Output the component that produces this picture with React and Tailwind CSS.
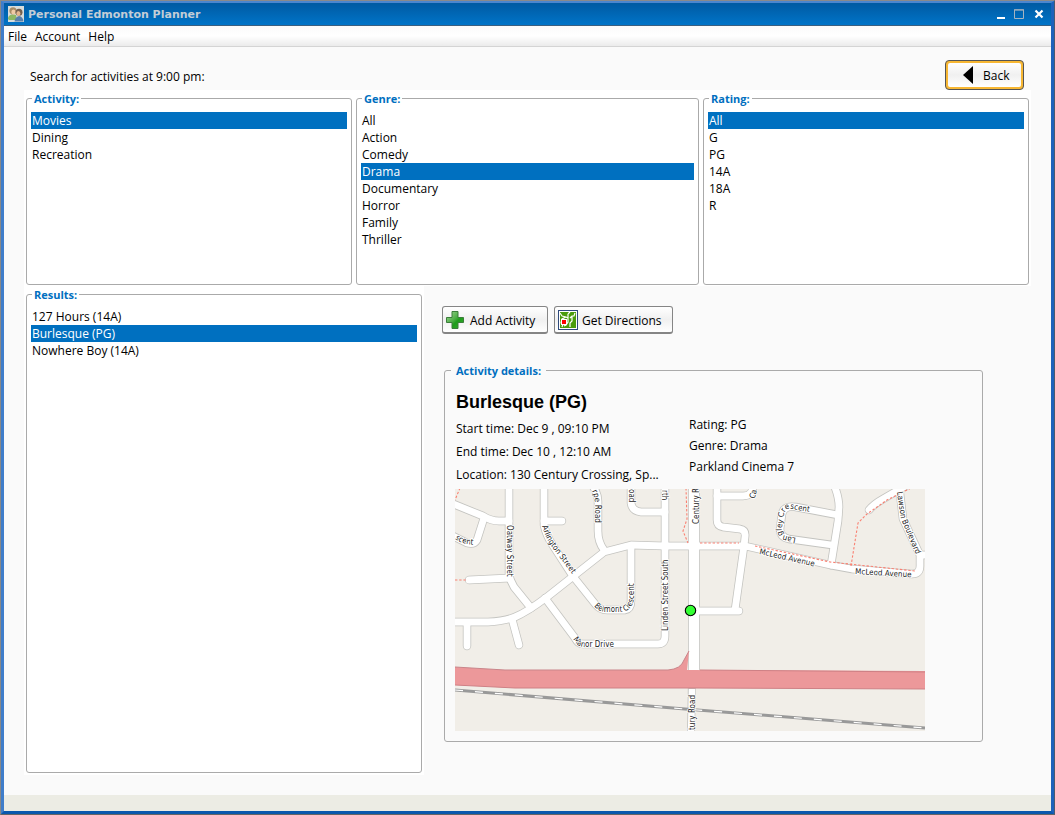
import { useState } from "react";

const roads = [
  "M-4 14 L28 27 Q36 32 44 32 L54 32",
  "M29 29 L22 51 Q19 56 12 54 L-4 46",
  "M54 -4 L54 88 L59 98 L76 119",
  "M14 91 L55 89",
  "M89 -4 L89 36 Q91 46 97 55 L117 86 L141 116 Q145 121 152 121 L170 121 Q176 120 176 112 L176 57",
  "M89 32 L107 32",
  "M137 -4 Q143 4 143 12 L143 42 Q143 53 149 61",
  "M-4 133 L33 133 Q50 132 60 128 Q72 123 92 108 L149 63 L176 56 L210 57 L290 57 L375 76 L397 80 L443 84 L457 85 Q465 85 465 77 L465 66 L474 66",
  "M176 -4 L176 14 Q177 22 186 23 L210 23",
  "M210 -4 L210 147 Q210 155 203 155 L128 155 Q123 155 120 149 L90 109",
  "M262 -4 L262 31 Q262 37 268 38 L285 40 Q291 41 290 48 L289 57 L280 121",
  "M262 7 L288 7 Q298 7 298 -4",
  "M240 122 L284 122",
  "M379 -4 Q384 8 384 18 L383 32 L376 76",
  "M383 26 L341 18 Q329 16 327 25 L325 40 Q325 48 334 50 L377 56",
  "M414 21 Q419 15 428 10 L452 -4",
  "M444 -4 L448 30 L464 64",
  "M12 134 L12 157",
  "M57 130 L64 156",
];

const paths = [
  "M5 -1 L0 11",
  "M231 -1 L232 30 L228 42 L233 54",
  "M0 91 L12 91",
  "M245 54 L284 54",
  "M300 57 L375 73 L460 82",
  "M396 77 L403 34 L412 25 L432 11 L456 -1",
];

const labels = [
  { id: "oatway", d: "M52 36 L52 100", text: "Oatway Street" },
  { id: "arlington", d: "M87 37 Q91 50 97 58 L126 97", text: "Arlington Street" },
  { id: "thorpe", d: "M137 2 Q140 8 140 16 L140 60", text: "rpe Road" },
  { id: "road", d: "M174 0 L174 30", text: "oad" },
  { id: "north", d: "M207 1 L207 30", text: "rth" },
  { id: "linden", d: "M213 142 L213 50", text: "Linden Street South" },
  { id: "belmont", d: "M139 117 Q144 123 152 123 L166 123 Q178 122 179 108 L179 60", text: "Belmont Crescent" },
  { id: "manor", d: "M118 150 Q122 158 130 158 L190 158", text: "Manor Drive" },
  { id: "scent", d: "M0 50 Q10 57 28 56", text: "scent" },
  { id: "century", d: "M244 35 L244 -10", text: "Century R" },
  { id: "tury", d: "M240 241 L240 190", text: "tury Road" },
  { id: "mcleod1", d: "M304 65 L375 81", text: "McLeod Avenue" },
  { id: "mcleod2", d: "M400 85 L470 89", text: "McLeod Avenue" },
  { id: "lawson", d: "M442 3 L446 30 L467 80", text: "Lawson Boulevard" },
  { id: "langley", d: "M341 49 L331 47 Q326 46 327 38 L329 25 Q331 18 338 20 L364 25", text: "Langley Crescent" },
  { id: "ca", d: "M299 10 Q302 6 302 -4", text: "Ca" },
];

function StreetMap() {
  return (
    <svg
      viewBox="0 0 470 242"
      className="block h-[242px] w-[470px]"
      role="img"
      aria-label="Map of the activity location"
      fontFamily="'DejaVu Sans Condensed', 'Open Sans', sans-serif"
      fontSize="8"
    >
      <rect width="470" height="242" fill="#f1eee8" />
      <g fill="none" strokeLinecap="round" strokeLinejoin="round">
        {roads.map((d) => (
          <path key={d} d={d} stroke="#c4c4c0" strokeWidth="8.4" />
        ))}
        <path d="M239 -4 L239 188" stroke="#c4c4c0" strokeWidth="12" strokeLinecap="butt" />
        <path d="M237 190 L236 246" stroke="#c4c4c0" strokeWidth="8" />
        {roads.map((d) => (
          <path key={d} d={d} stroke="#fff" strokeWidth="6.8" />
        ))}
        <path d="M239 -4 L239 190" stroke="#fff" strokeWidth="10.4" strokeLinecap="butt" />
      </g>
      <path
        d="M0 178 L50 181 L213 181 Q226 180 229 171 L234 162 L232 181 L470 182 L470 200 L240 199 L60 199 L0 196 Z"
        fill="#ec989a"
      />
      <path d="M0 178 L50 181 L213 181 Q226 180 229 171 L234 162" fill="none" stroke="#c9858a" />
      <path d="M245 181 L470 183 M0 196 L60 199 L240 199 L470 200" fill="none" stroke="#ce8085" />
      <path d="M237 200 L236 246" stroke="#fff" strokeWidth="6.4" />
      <path d="M0 201 L230 220 L470 239" fill="none" stroke="#999" strokeWidth="3" />
      <path d="M0 201 L230 220 L470 239" fill="none" stroke="#fff" strokeWidth="1.2" strokeDasharray="8 12" />
      <g fill="none" stroke="#fa8072" strokeWidth="1.1" strokeDasharray="2.4 1.8">
        {paths.map((d) => (
          <path key={d} d={d} />
        ))}
      </g>
      {labels.map((l) => (
        <g key={l.id}>
          <path id={`street-${l.id}`} d={l.d} fill="none" />
          <text fill="#222" stroke="#fff" strokeWidth="1.6" paintOrder="stroke">
            <textPath href={`#street-${l.id}`}>{l.text}</textPath>
          </text>
        </g>
      ))}
      <circle cx="235.5" cy="121.5" r="5.2" fill="#33ff33" stroke="#000" strokeWidth="1.1" />
    </svg>
  );
}

function ListBox({ title, items, initial, className = "" }) {
  const [selected, setSelected] = useState(initial);
  return (
    <fieldset className={`min-w-0 rounded-[3px] border border-[#aaa] px-1 pb-1 ${className}`}>
      <legend className="ml-px bg-white px-0.5 pt-0.5 text-[11px] leading-[14px] font-bold text-[#006fc0]">
        {title}
      </legend>
      <ul role="listbox" aria-label={title} className="pt-1.5">
        {items.map((item) => (
          <li
            key={item}
            role="option"
            aria-selected={item === selected}
            onClick={() => setSelected(item)}
            className={`h-[17px] cursor-default px-px leading-[17px] ${
              item === selected ? "bg-[#0070c0] text-white" : ""
            }`}
          >
            {item}
          </li>
        ))}
      </ul>
    </fieldset>
  );
}

function PeopleIcon() {
  return (
    <svg viewBox="0 0 16 16" className="size-4" aria-hidden="true">
      <rect width="16" height="16" fill="#d8dcdb" />
      <path d="M0 13 Q0 9 4 8.500 L8 9 L9 14 L1 14Z" fill="#8db865" />
      <circle cx="5" cy="4.800" r="3.600" fill="#a98d66" />
      <ellipse cx="5.500" cy="6" rx="2.200" ry="2.600" fill="#efcba6" />
      <path d="M6.500 15.500 Q7 11 11 10 Q15 10.500 15.500 15.500Z" fill="#5a80ab" />
      <circle cx="11" cy="6.200" r="3.500" fill="#75604e" />
      <ellipse cx="10.400" cy="7.500" rx="2" ry="2.600" fill="#e5b68f" />
    </svg>
  );
}

function PlusIcon() {
  return (
    <svg viewBox="0 0 18 18" className="size-[18px]" aria-hidden="true">
      <defs>
        <linearGradient id="plus-fill" x1="0" y1="0" x2="1" y2="1">
          <stop offset="0" stopColor="#a5dc9a" />
          <stop offset="0.45" stopColor="#4fae48" />
          <stop offset="0.6" stopColor="#1f9c1c" />
          <stop offset="1" stopColor="#35b02e" />
        </linearGradient>
      </defs>
      <path
        d="M6 .5 H12 V6.500 H17.500 V11.500 H12 V17.500 H6 V11.500 H.5 V6.500 H6Z"
        fill="url(#plus-fill)"
        stroke="#3b7d3b"
        strokeLinejoin="round"
      />
    </svg>
  );
}

function DirectionsIcon() {
  return (
    <svg viewBox="0 0 20 20" className="size-5" aria-hidden="true">
      <rect x=".5" y=".5" width="19" height="19" fill="#fff" stroke="#2f4a7c" />
      <rect x="2" y="2" width="16" height="16" fill="#4a9c0c" />
      <path
        d="M2 3 L4 6 L8 7 L10 8 M8 7 L4 9 L3 13 L5 14 L4 17 M10 4 L10 12 L8 15 L6 16 M10 4 L12 2 M12 8 L14 6 L16 6 L17 3 M14 6 L14 11 L12 13 L12 17"
        fill="none"
        stroke="#fff"
        strokeWidth="1.200"
      />
      <rect x="3" y="9" width="6" height="6" fill="#fff" />
      <rect x="4" y="10" width="4" height="4" fill="#f00" />
    </svg>
  );
}

const buttonClass =
  "flex h-7 items-center rounded-[3px] border border-b-2 border-[#858585] bg-linear-to-b from-white via-[#f0f0f0] to-white";

export default function App() {
  return (
    <div className="flex min-h-screen flex-col border border-t-[#8a8a8a] border-r-[#4a5a70] border-b-[#666] border-l-[#888] bg-[#0d5cb0] font-['Open_Sans','Noto_Sans',sans-serif] text-[12px] text-black">
      <div className="flex grow flex-col border-x-[3px] border-t-[2px] border-b-[3px] border-t-[#4b86cf] border-r-[#1d62bb] border-b-[#0b58ad] border-l-[#3f7dca]">
        <header className="flex h-[23px] items-center border-b border-[#3a5f80] bg-linear-to-b from-[#005aa2] to-[#0074c8] pl-1 pr-[7px]">
          <PeopleIcon />
          <h1 className="ml-1 grow pt-0.5 font-['DejaVu_Sans','Noto_Sans',sans-serif] text-[11px] leading-4 font-bold text-[#c3cdd6]">
            Personal Edmonton Planner
          </h1>
          <div className="flex gap-2">
            <button aria-label="Minimize" className="size-2.5">
              <svg viewBox="0 0 10 10"><path d="M1 8 H9 V10 H1Z" fill="#fff" /></svg>
            </button>
            <button aria-label="Maximize" className="size-2.5">
              <svg viewBox="0 0 10 10"><path d="M.5 1 H9.500 V9.500 H.5Z M0 .8 H10" fill="none" stroke="#a6b3bf" /></svg>
            </button>
            <button aria-label="Close" className="ml-0.5 size-2.5">
              <svg viewBox="0 0 10 10"><path d="M1.500 1.500 L8.500 8.500 M8.500 1.500 L1.500 8.500" stroke="#fff" strokeWidth="2.200" /></svg>
            </button>
          </div>
        </header>

        <nav className="flex h-[21px] items-center gap-2 border-b border-[#d4d4d4] bg-linear-to-b from-[#fafafa] via-white to-[#ebebeb] px-1 pt-0.5">
          <button>File</button>
          <button>Account</button>
          <button>Help</button>
        </nav>

        <main className="grow bg-[#fafafa] px-5 pt-[13px] pb-5">
          <div className="flex justify-between pl-1.5 pr-[7px]">
            <p className="pt-[9px] leading-4">Search for activities at 9:00 pm:</p>
            <button className="flex h-[30px] items-center rounded-[4px] border border-[#555] bg-[#f7b733] p-0.5">
              <span className="flex h-6 w-[73px] items-center gap-2.5 rounded-[2px] bg-linear-to-b from-white via-[#f0f0f0] to-white pl-[15px]">
                <svg viewBox="0 0 10 18" className="h-[18px] w-2.5" aria-hidden="true">
                  <path d="M10 0 V18 L0 9Z" />
                </svg>
                <span className="pt-0.5">Back</span>
              </span>
            </button>
          </div>

          <div className="grid h-[196px] grid-cols-[326fr_343fr_326fr] gap-1 bg-white px-0.5 pb-px">
            <ListBox title="Activity:" items={["Movies", "Dining", "Recreation"]} initial="Movies" />
            <ListBox
              title="Genre:"
              items={["All", "Action", "Comedy", "Drama", "Documentary", "Horror", "Family", "Thriller"]}
              initial="Drama"
            />
            <ListBox title="Rating:" items={["All", "G", "PG", "14A", "18A", "R"]} initial="All" />
          </div>

          <div className="flex">
            <div className="flex h-[489px] w-[400px] shrink-0 bg-white px-0.5 pb-0.5">
              <ListBox
                title="Results:"
                items={["127 Hours (14A)", "Burlesque (PG)", "Nowhere Boy (14A)"]}
                initial="Burlesque (PG)"
                className="grow"
              />
            </div>

            <section className="ml-[18px] pt-5">
              <div className="flex gap-1.5">
                <button className={`${buttonClass} w-[106px] gap-1.5 pl-[3px]`}>
                  <PlusIcon />
                  <span className="pt-0.5">Add Activity</span>
                </button>
                <button className={`${buttonClass} w-[119px] gap-1 pl-[3px]`}>
                  <DirectionsIcon />
                  <span className="pt-0.5">Get Directions</span>
                </button>
              </div>

              <fieldset className="mt-7 ml-0.5 w-[539px] rounded-[3px] border border-[#aaa] px-2.5 pb-2.5">
                <legend className="-ml-1 px-[5px] pt-0.5 text-[11px] leading-[14px] font-bold text-[#006fc0]">
                  Activity details:
                </legend>
                <h2 className="pt-3 pl-px font-['Liberation_Sans',Arial,sans-serif] text-[18px] leading-6 font-bold">
                  Burlesque (PG)
                </h2>
                <div className="flex pb-[3px]">
                  <div className="w-[234px] pt-[3px] pl-px leading-[23px]">
                    <p>Start time: Dec 9 , 09:10 PM</p>
                    <p>End time: Dec 10 , 12:10 AM</p>
                    <p>Location: 130 Century Crossing, Sp...</p>
                  </div>
                  <div className="leading-[21px]">
                    <p>Rating: PG</p>
                    <p>Genre: Drama</p>
                    <p>Parkland Cinema 7</p>
                  </div>
                </div>
                <StreetMap />
              </fieldset>
            </section>
          </div>
        </main>

        <footer className="h-4 bg-[#ecece4]" />
      </div>
    </div>
  );
}
